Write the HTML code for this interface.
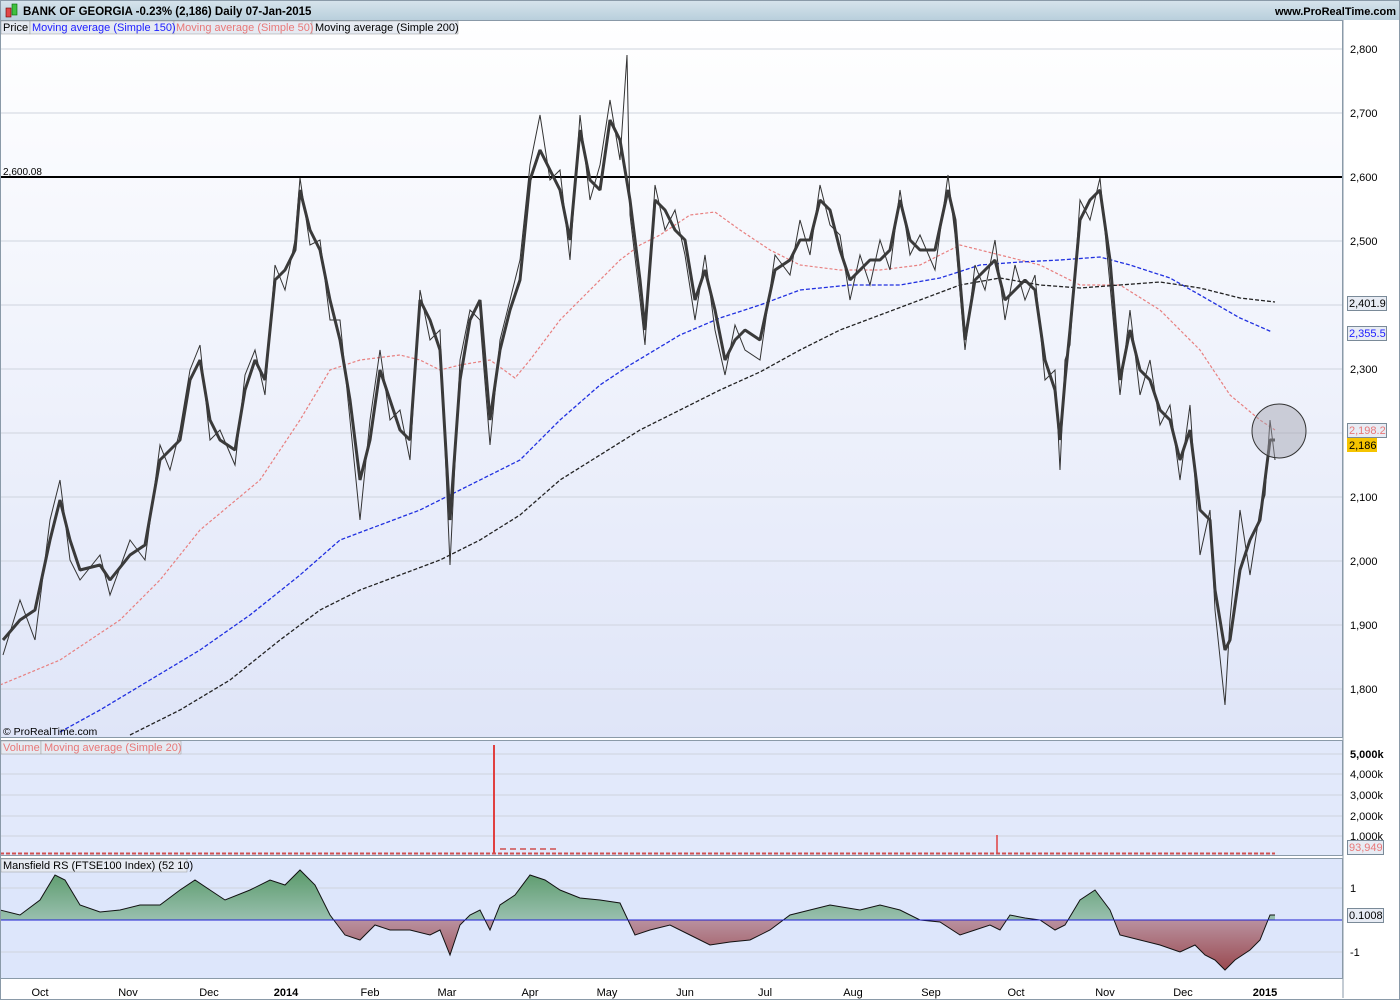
<!DOCTYPE html>
<html><head><meta charset="utf-8"><style>
body{margin:0;width:1400px;height:1000px;overflow:hidden;background:#fff;font-family:"Liberation Sans",sans-serif}
svg text{font-family:"Liberation Sans",sans-serif;font-size:11px}
</style></head><body>
<svg width="1400" height="1000" xmlns="http://www.w3.org/2000/svg">
<defs>
<linearGradient id="hd" x1="0" y1="0" x2="0" y2="1"><stop offset="0" stop-color="#d7e4ec"/><stop offset="1" stop-color="#b9cfdc"/></linearGradient>
<linearGradient id="mn" x1="0" y1="0" x2="0" y2="1"><stop offset="0" stop-color="#ffffff"/><stop offset="1" stop-color="#dfe5f8"/></linearGradient>
<linearGradient id="gr" x1="0" y1="0" x2="0" y2="1"><stop offset="0" stop-color="#5a9a6a"/><stop offset="1" stop-color="#d8e6f4"/></linearGradient>
<linearGradient id="rd" x1="0" y1="0" x2="0" y2="1"><stop offset="0" stop-color="#d8d8ee"/><stop offset="1" stop-color="#9a4a50"/></linearGradient>
<clipPath id="ab"><rect x="0" y="860" width="1342" height="60"/></clipPath>
<clipPath id="bl"><rect x="0" y="920" width="1342" height="58"/></clipPath>
</defs>
<rect x="0" y="0" width="1400" height="20" fill="url(#hd)"/>
<rect x="6" y="8" width="5" height="9" fill="#e04848" stroke="#600" stroke-width="0.6"/>
<rect x="12" y="4" width="5" height="11" fill="#40c040" stroke="#060" stroke-width="0.6"/>
<text x="23" y="15" font-weight="bold" style="font-size:11.5px">BANK OF GEORGIA   -0.23% (2,186)   Daily   07-Jan-2015</text>
<text x="1396" y="15" text-anchor="end" font-weight="bold">www.ProRealTime.com</text>
<rect x="0.5" y="20.5" width="1342" height="717" fill="url(#mn)" stroke="#8a9aa8"/>
<g fill="#e6eaf2" stroke="#999" stroke-width="0.5">
<rect x="1" y="21" width="29" height="13"/><rect x="30" y="21" width="144" height="13"/><rect x="174" y="21" width="138" height="13"/><rect x="312" y="21" width="146" height="13"/></g>
<text x="3" y="31">Price</text><text x="32" y="31" fill="#2020ff">Moving average (Simple 150)</text><text x="176" y="31" fill="#e87878">Moving average (Simple 50)</text><text x="315" y="31">Moving average (Simple 200)</text>
<g stroke="#cfd4de" stroke-width="1">
<line x1="0" y1="49" x2="1342" y2="49"/><line x1="0" y1="113" x2="1342" y2="113"/><line x1="0" y1="241" x2="1342" y2="241"/><line x1="0" y1="305" x2="1342" y2="305"/><line x1="0" y1="369" x2="1342" y2="369"/><line x1="0" y1="433" x2="1342" y2="433"/><line x1="0" y1="497" x2="1342" y2="497"/><line x1="0" y1="561" x2="1342" y2="561"/><line x1="0" y1="625" x2="1342" y2="625"/><line x1="0" y1="689" x2="1342" y2="689"/></g>
<line x1="0" y1="177" x2="1342" y2="177" stroke="#000" stroke-width="2"/>
<text x="3" y="175" style="font-size:10px">2,600.08</text>
<polyline fill="none" stroke="#e88080" stroke-width="1.2" stroke-dasharray="3,2" points="0,685 60,660 120,620 160,580 200,530 260,480 300,420 330,370 360,360 400,355 420,360 440,370 460,365 490,360 515,378 530,360 560,320 590,290 620,260 640,245 660,235 690,215 715,212 740,230 770,250 800,265 840,270 880,270 920,265 960,245 1000,255 1040,265 1080,285 1120,285 1160,310 1200,350 1230,395 1260,420 1275,430"/>
<polyline fill="none" stroke="#2030e0" stroke-width="1.3" stroke-dasharray="4,2" points="60,732 100,710 150,680 200,650 250,615 300,575 340,540 380,525 420,510 460,490 500,470 520,460 560,420 600,385 630,365 680,335 720,318 760,305 800,290 850,285 900,285 940,278 980,265 1020,262 1060,260 1100,257 1130,265 1170,278 1200,295 1240,318 1272,332"/>
<polyline fill="none" stroke="#222" stroke-width="1.3" stroke-dasharray="4,2" points="130,735 180,710 230,680 280,640 320,610 360,590 400,575 440,560 480,540 520,515 560,480 600,455 640,430 680,410 720,390 760,372 800,350 840,330 880,315 920,300 960,285 1000,278 1040,285 1080,288 1120,285 1160,282 1200,288 1240,298 1275,302"/>
<polyline fill="none" stroke="#333" stroke-width="1" points="3,655 20,600 35,640 50,520 60,480 70,560 80,580 100,555 110,595 130,540 145,560 160,445 170,470 180,430 190,370 200,345 210,440 220,430 235,465 245,375 255,350 265,395 275,265 285,290 295,240 300,178 310,245 320,240 330,320 340,320 350,420 360,520 370,420 380,350 390,420 400,410 410,460 420,290 430,340 440,330 450,565 460,360 470,310 480,320 490,445 500,340 510,300 520,260 530,165 540,115 550,180 560,170 570,260 580,115 590,200 600,165 610,100 620,160 627,55 630,215 640,300 645,345 655,185 665,230 675,210 685,255 695,320 705,255 715,330 725,375 735,325 745,350 760,360 775,255 790,275 800,220 810,255 820,185 830,225 840,235 850,300 860,255 870,285 880,240 890,270 900,190 910,255 920,235 935,270 948,175 955,235 965,350 975,265 985,290 995,240 1005,320 1015,265 1025,300 1035,275 1045,380 1055,370 1060,470 1065,360 1070,345 1080,200 1090,220 1100,178 1110,285 1120,395 1130,310 1140,395 1150,360 1160,425 1170,405 1180,480 1190,405 1200,555 1210,510 1215,610 1225,705 1230,620 1240,510 1250,575 1260,510 1265,495 1270,420 1275,460"/>
<polyline fill="none" stroke="#3a3a3a" stroke-width="3" stroke-linejoin="bevel" points="3,640 20,620 35,610 50,540 60,500 70,540 80,570 100,565 110,580 130,555 145,545 160,460 170,450 180,440 190,380 200,360 210,420 220,440 235,450 245,390 255,360 265,380 275,280 285,270 295,250 300,190 310,230 320,250 330,300 340,340 350,400 360,480 370,440 380,370 390,400 400,430 410,440 420,300 430,320 440,350 450,520 460,380 470,320 480,300 490,420 500,350 510,310 520,280 530,180 540,150 550,170 560,190 570,240 580,130 590,180 600,190 610,120 620,140 630,200 640,280 645,330 655,200 665,210 675,230 685,240 695,300 705,270 715,310 725,360 735,340 745,330 760,340 775,270 790,260 800,240 810,240 820,200 830,210 840,250 850,280 860,270 870,260 880,260 890,250 900,200 910,240 920,250 935,250 948,190 955,220 965,340 975,280 985,270 995,260 1005,300 1015,290 1025,280 1035,290 1045,360 1055,390 1060,440 1065,380 1070,330 1080,220 1090,200 1100,190 1110,260 1120,380 1130,330 1140,370 1150,380 1160,410 1170,420 1180,460 1190,430 1200,510 1210,520 1215,590 1225,650 1230,640 1240,570 1250,540 1260,520 1265,480 1270,440 1275,440"/>
<circle cx="1279" cy="431" r="27" fill="rgba(160,160,170,0.45)" stroke="#333" stroke-width="1"/>
<text x="3" y="735" style="font-size:10.5px">© ProRealTime.com</text>
<line x1="1343" y1="20" x2="1343" y2="998" stroke="#8a9aa8"/>
<g style="font-size:11px">
<text x="1350" y="53">2,800</text><text x="1350" y="117">2,700</text><text x="1350" y="181">2,600</text><text x="1350" y="245">2,500</text><text x="1350" y="373">2,300</text><text x="1350" y="501">2,100</text><text x="1350" y="565">2,000</text><text x="1350" y="629">1,900</text><text x="1350" y="693">1,800</text></g>
<rect x="1347.5" y="296.5" width="39" height="14" fill="#e8ecf4" stroke="#7a8a98"/><text x="1349" y="307">2,401.9</text>
<rect x="1347.5" y="326.5" width="39" height="14" fill="#e8ecf4" stroke="#7a8a98"/><text x="1349" y="337" fill="#2020ff">2,355.5</text>
<rect x="1347.5" y="423.5" width="39" height="14" fill="#e8ecf4" stroke="#7a8a98"/><text x="1349" y="434" fill="#e87878">2,198.2</text>
<rect x="1347" y="438" width="30" height="14" fill="#f5c400"/><text x="1349" y="449">2,186</text>
<rect x="0.5" y="740.5" width="1342" height="115" fill="#e2e9fb" stroke="#8a9aa8"/>
<g stroke="#cfd4de"><line x1="0" y1="754" x2="1342" y2="754"/><line x1="0" y1="774" x2="1342" y2="774"/><line x1="0" y1="795" x2="1342" y2="795"/><line x1="0" y1="816" x2="1342" y2="816"/><line x1="0" y1="836" x2="1342" y2="836"/></g>
<g fill="#e6eaf2" stroke="#999" stroke-width="0.5"><rect x="1" y="741" width="40" height="13"/><rect x="41" y="741" width="140" height="13"/></g>
<text x="3" y="751" fill="#e87878">Volume</text><text x="44" y="751" fill="#e87878">Moving average (Simple 20)</text>
<line x1="494" y1="745" x2="494" y2="854" stroke="#e04040" stroke-width="2"/>
<line x1="997" y1="835" x2="997" y2="854" stroke="#e04040" stroke-width="1.5"/>
<line x1="0" y1="853.5" x2="1275" y2="853.5" stroke="#d05050" stroke-width="2" stroke-dasharray="4,2"/>
<line x1="500" y1="849" x2="560" y2="849" stroke="#d05050" stroke-width="1.5" stroke-dasharray="6,4"/>
<g style="font-size:11px"><text x="1350" y="758" font-weight="bold">5,000k</text><text x="1350" y="778">4,000k</text><text x="1350" y="799">3,000k</text><text x="1350" y="820">2,000k</text><text x="1350" y="840">1,000k</text></g>
<rect x="1347.5" y="840.5" width="36" height="14" fill="#e8ecf4" stroke="#7a8a98"/><text x="1349" y="851" fill="#e87878">93,949</text>
<rect x="0.5" y="858.5" width="1342" height="120" fill="#dde6fb" stroke="#8a9aa8"/>
<g stroke="#cfd4de"><line x1="0" y1="888" x2="1342" y2="888"/><line x1="0" y1="952" x2="1342" y2="952"/></g>
<polygon clip-path="url(#ab)" fill="url(#gr)" points="0,920 0,910 20,915 40,900 55,875 65,880 80,905 100,912 120,910 140,905 160,905 180,890 195,880 210,890 225,900 250,890 270,880 285,885 300,870 315,885 330,915 345,935 360,940 375,925 390,930 410,930 430,935 440,930 450,955 460,925 470,915 480,910 490,930 500,905 515,895 530,875 545,880 560,890 580,898 600,900 620,903 635,935 650,930 670,925 690,935 710,945 730,942 750,940 770,930 790,915 810,910 830,905 860,910 880,905 900,910 920,920 940,922 960,935 975,930 990,925 1000,930 1010,915 1025,918 1040,920 1055,930 1065,925 1080,900 1095,890 1110,910 1120,935 1140,940 1160,945 1180,952 1195,945 1205,955 1215,960 1225,970 1235,960 1250,950 1260,940 1270,915 1275,915 1275,920"/>
<polygon clip-path="url(#bl)" fill="url(#rd)" points="0,920 0,910 20,915 40,900 55,875 65,880 80,905 100,912 120,910 140,905 160,905 180,890 195,880 210,890 225,900 250,890 270,880 285,885 300,870 315,885 330,915 345,935 360,940 375,925 390,930 410,930 430,935 440,930 450,955 460,925 470,915 480,910 490,930 500,905 515,895 530,875 545,880 560,890 580,898 600,900 620,903 635,935 650,930 670,925 690,935 710,945 730,942 750,940 770,930 790,915 810,910 830,905 860,910 880,905 900,910 920,920 940,922 960,935 975,930 990,925 1000,930 1010,915 1025,918 1040,920 1055,930 1065,925 1080,900 1095,890 1110,910 1120,935 1140,940 1160,945 1180,952 1195,945 1205,955 1215,960 1225,970 1235,960 1250,950 1260,940 1270,915 1275,915 1275,920"/>
<polyline fill="none" stroke="#111" stroke-width="1" points="0,910 20,915 40,900 55,875 65,880 80,905 100,912 120,910 140,905 160,905 180,890 195,880 210,890 225,900 250,890 270,880 285,885 300,870 315,885 330,915 345,935 360,940 375,925 390,930 410,930 430,935 440,930 450,955 460,925 470,915 480,910 490,930 500,905 515,895 530,875 545,880 560,890 580,898 600,900 620,903 635,935 650,930 670,925 690,935 710,945 730,942 750,940 770,930 790,915 810,910 830,905 860,910 880,905 900,910 920,920 940,922 960,935 975,930 990,925 1000,930 1010,915 1025,918 1040,920 1055,930 1065,925 1080,900 1095,890 1110,910 1120,935 1140,940 1160,945 1180,952 1195,945 1205,955 1215,960 1225,970 1235,960 1250,950 1260,940 1270,915 1275,915"/>
<line x1="0" y1="920" x2="1342" y2="920" stroke="#2020d0" stroke-width="1"/>
<rect x="1" y="859" width="186" height="13" fill="#e6eaf2" stroke="#999" stroke-width="0.5"/>
<text x="3" y="869">Mansfield RS (FTSE100 Index) (52 10)</text>
<text x="1350" y="892">1</text><text x="1350" y="956">-1</text>
<rect x="1347.5" y="908.5" width="36" height="14" fill="#e8ecf4" stroke="#7a8a98"/><text x="1349" y="919">0.1008</text>
<g style="font-size:11px" text-anchor="middle">
<text x="40" y="996">Oct</text><text x="128" y="996">Nov</text><text x="209" y="996">Dec</text><text x="286" y="996" font-weight="bold">2014</text><text x="370" y="996">Feb</text><text x="447" y="996">Mar</text><text x="530" y="996">Apr</text><text x="607" y="996">May</text><text x="685" y="996">Jun</text><text x="765" y="996">Jul</text><text x="853" y="996">Aug</text><text x="931" y="996">Sep</text><text x="1016" y="996">Oct</text><text x="1105" y="996">Nov</text><text x="1183" y="996">Dec</text><text x="1265" y="996" font-weight="bold">2015</text></g>
<rect x="0.5" y="0.5" width="1399" height="999" fill="none" stroke="#8a9aa8"/>
</svg>
</body></html>
